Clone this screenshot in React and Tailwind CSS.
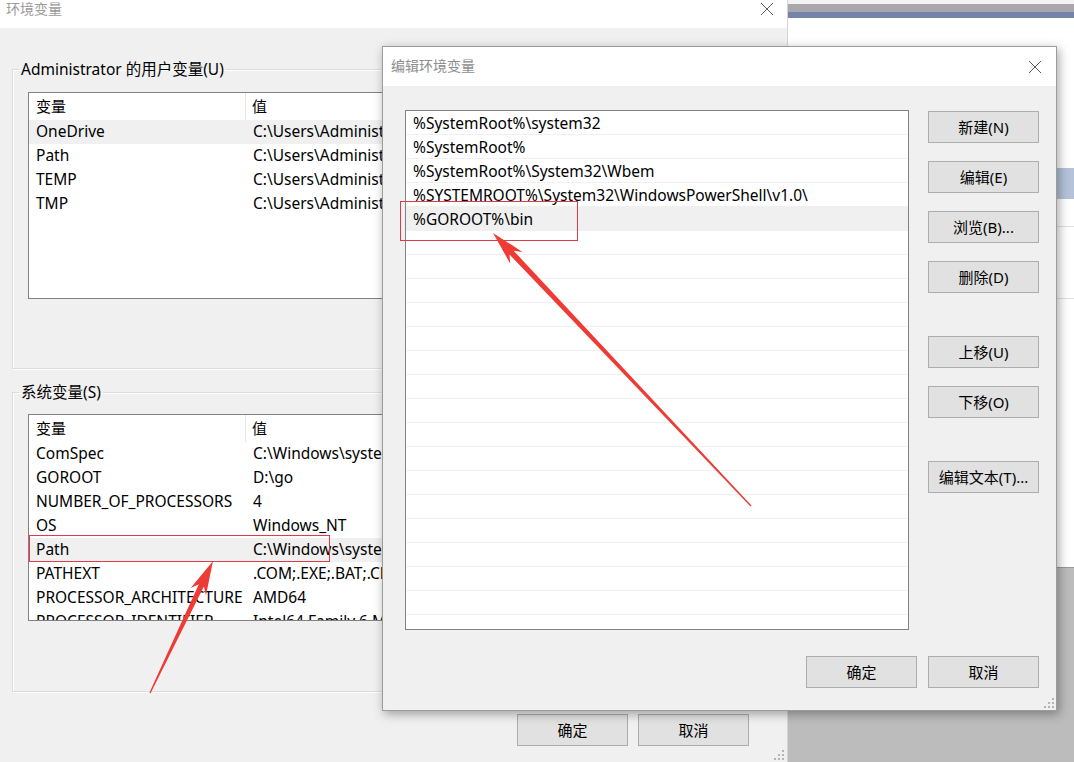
import React from "react";

const font = "font-['Noto_Sans','Noto_Sans_CJK_SC',sans-serif]";

const userVars = [
  ["OneDrive", "C:\\Users\\Administrator\\OneDrive", true],
  ["Path", "C:\\Users\\Administrator\\AppData\\Local\\Microsoft\\WindowsApps"],
  ["TEMP", "C:\\Users\\Administrator\\AppData\\Local\\Temp"],
  ["TMP", "C:\\Users\\Administrator\\AppData\\Local\\Temp"],
];

const sysVars = [
  ["ComSpec", "C:\\Windows\\system32\\cmd.exe"],
  ["GOROOT", "D:\\go"],
  ["NUMBER_OF_PROCESSORS", "4"],
  ["OS", "Windows_NT"],
  ["Path", "C:\\Windows\\system32;C:\\Windows", true],
  ["PATHEXT", ".COM;.EXE;.BAT;.CMD;.VBS"],
  ["PROCESSOR_ARCHITECTURE", "AMD64"],
  ["PROCESSOR_IDENTIFIER", "Intel64 Family 6 Model 60"],
];

const pathItems = [
  "%SystemRoot%\\system32",
  "%SystemRoot%",
  "%SystemRoot%\\System32\\Wbem",
  "%SYSTEMROOT%\\System32\\WindowsPowerShell\\v1.0\\",
  "%GOROOT%\\bin",
];

function CloseX() {
  return (
    <svg width="14" height="14" viewBox="0 0 14 14">
      <path d="M1 1L13 13M13 1L1 13" stroke="#5a5a5a" strokeWidth="1" fill="none" />
    </svg>
  );
}

function Btn({ children, className = "" }) {
  return (
    <div
      className={`w-[111px] h-[32px] bg-[#e1e1e1] border border-[#adadad] flex items-center justify-center text-[15px] text-black ${className}`}
    >
      {children}
    </div>
  );
}

function VarList({ rows }) {
  return (
    <div className="ml-[15px] w-[740px] h-[207px] bg-white border border-[#828282] overflow-hidden">
      <div className="flex h-[27px] items-center text-[15px]">
        <div className="w-[217px] pl-[7px] border-r border-[#e5e5e5] h-full flex items-center">变量</div>
        <div className="pl-[6px]">值</div>
      </div>
      {rows.map(([k, v, sel]) => (
        <div
          key={k}
          className={`flex h-[24px] items-center text-[15.5px] whitespace-nowrap ${sel ? "bg-[#f0f0f0]" : ""}`}
        >
          <div className="w-[217px] pl-[7px]">{k}</div>
          <div className="pl-[7px]">{v}</div>
        </div>
      ))}
    </div>
  );
}

function Group({ label, rows, className = "" }) {
  return (
    <fieldset className={`border border-[#dcdcdc] shadow-[inset_1px_1px_0_#fff,1px_1px_0_#fff] w-[764px] ${className}`}>
      <legend className="ml-[6px] px-[2px] text-[15.5px] leading-[20px] text-black">{label}</legend>
      <VarList rows={rows} />
    </fieldset>
  );
}

function arrowPoints(tx, ty, px, py) {
  const dx = px - tx;
  const dy = py - ty;
  const L = Math.hypot(dx, dy);
  const ux = dx / L;
  const uy = dy / L;
  const nx = -uy;
  const ny = ux;
  const head = 34;
  const neckBack = 27;
  const p = (x, y) => `${x.toFixed(1)},${y.toFixed(1)}`;
  return [
    p(tx + nx * 0.7, ty + ny * 0.7),
    p(px - ux * neckBack + nx * 2.8, py - uy * neckBack + ny * 2.8),
    p(px - ux * head + nx * 8.5, py - uy * head + ny * 8.5),
    p(px, py),
    p(px - ux * head - nx * 8.5, py - uy * head - ny * 8.5),
    p(px - ux * neckBack - nx * 2.8, py - uy * neckBack - ny * 2.8),
    p(tx - nx * 0.7, ty - ny * 0.7),
  ].join(" ");
}

function Grip() {
  const dots = [
    [8, 0], [4, 4], [8, 4], [0, 8], [4, 8], [8, 8],
  ];
  return (
    <svg width="11" height="11" viewBox="0 0 11 11">
      {dots.map(([x, y], i) => (
        <rect key={i} x={x} y={y} width="2" height="2" fill="#b4b4b4" />
      ))}
    </svg>
  );
}

export default function App() {
  return (
    <div className={`relative w-[1074px] h-[762px] overflow-hidden bg-[#bcbcbc] text-black ${font}`}>
      {/* window far behind */}
      <div className="absolute left-[788px] top-0 right-0 h-[568px] bg-white border-b border-[#9a9a9a] flex flex-col">
        <div className="h-[4px] bg-[#f3f3f3]" />
        <div className="h-[8px] bg-[#aaa6ae]" />
        <div className="h-[6px] bg-[#7584aa]" />
        <div className="h-[150px]" />
        <div className="h-[31px] bg-[#b4c3da] ml-[268px]" />
        <div className="h-[27px]" />
        <div className="h-px bg-[#e2e2e2] ml-[268px]" />
        <div className="h-[71px]" />
        <div className="h-px bg-[#e2e2e2] ml-[268px]" />
      </div>

      {/* 环境变量 window */}
      <div className="absolute left-0 top-0 w-[788px] h-[762px] flex flex-col border-r border-[#d4d4d4]">
        <div className="h-[28px] bg-white flex items-start justify-between pl-[6px] pr-[13px]">
          <span className="text-[14px] leading-[18px] text-[#9b9b9b]">环境变量</span>
          <div className="pt-[2px]">
            <CloseX />
          </div>
        </div>
        <div className="flex-1 bg-[#f0f0f0] pl-[12px] pt-[31px] flex flex-col relative">
          <Group label="Administrator 的用户变量(U)" rows={userVars} className="pt-[13px] pb-[69px]" />
          <Group label="系统变量(S)" rows={sysVars} className="mt-[13px] pt-[12px] pb-[70px]" />
          <div className="flex justify-end gap-[10px] pr-[38px] mt-[22px]">
            <Btn className="w-[110px]">确定</Btn>
            <Btn className="w-[110px]">取消</Btn>
          </div>
          <div className="absolute right-[2px] bottom-[1px]">
            <Grip />
          </div>
        </div>
      </div>

      {/* 编辑环境变量 dialog */}
      <div className="absolute left-[382px] top-[46px] w-[675px] h-[665px] bg-[#f0f0f0] border border-[#9c9c9c] shadow-[2px_3px_10px_rgba(0,0,0,0.35)] flex flex-col">
        <div className="h-[39px] bg-white flex items-center justify-between pl-[8px] pr-[14px]">
          <span className="text-[14px] leading-[18px] -mt-[2px] text-[#8d8d8d]">编辑环境变量</span>
          <CloseX />
        </div>
        <div className="flex-1 flex flex-col pl-[22px] pr-[17px] pt-[24px] relative">
          <div className="flex gap-[19px]">
            <div className="w-[504px] h-[520px] bg-white border border-[#828282] overflow-hidden">
              {Array.from({ length: 22 }).map((_, i) => (
                <div
                  key={i}
                  className={`h-[24px] flex items-center pl-[7px] pt-[3px] text-[15.5px] whitespace-nowrap border-b border-[#f0f0f0] ${i === 4 ? "bg-[#f0f0f0]" : ""}`}
                >
                  {pathItems[i] || ""}
                </div>
              ))}
            </div>
            <div className="flex flex-col pt-[1px]">
              <Btn>新建(N)</Btn>
              <Btn className="mt-[18px]">编辑(E)</Btn>
              <Btn className="mt-[18px]">浏览(B)...</Btn>
              <Btn className="mt-[18px]">删除(D)</Btn>
              <Btn className="mt-[43px]">上移(U)</Btn>
              <Btn className="mt-[18px]">下移(O)</Btn>
              <Btn className="mt-[43px]">编辑文本(T)...</Btn>
            </div>
          </div>
          <div className="flex justify-end gap-[11px] mt-[26px]">
            <Btn>确定</Btn>
            <Btn>取消</Btn>
          </div>
          <div className="absolute right-[1px] bottom-[1px]">
            <Grip />
          </div>
        </div>
      </div>

      {/* annotations */}
      <div className="absolute left-[29px] top-[535px] w-[301px] h-[27px] border border-[#de3a4a]" />
      <div className="absolute left-[400px] top-[201px] w-[178px] h-[40px] border border-[#de3a4a]" />
      <svg className="absolute left-0 top-0" width="1074" height="762">
        <polygon points={arrowPoints(150, 693, 213, 561)} fill="#ee3b36" />
        <polygon points={arrowPoints(751, 506, 493, 233)} fill="#ee3b36" />
      </svg>
    </div>
  );
}
